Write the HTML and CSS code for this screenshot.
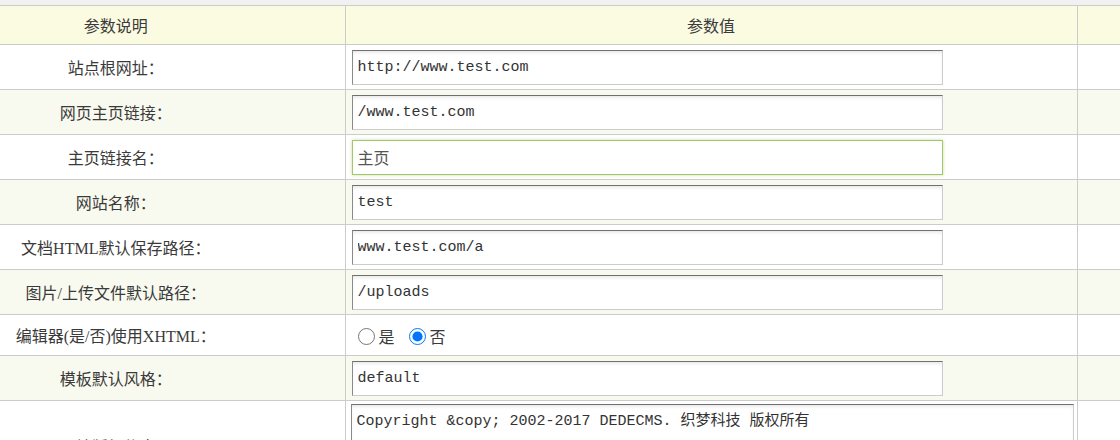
FILE: index.html
```html
<!DOCTYPE html>
<html lang="zh-CN">
<head>
<meta charset="utf-8">
<title>参数设置</title>
<link rel="stylesheet" href="styles.css">
</head>
<body>
<div class="topbar"></div>
<table class="cfg">
  <colgroup>
    <col class="c1"><col class="c2"><col class="c3">
  </colgroup>
  <tr class="head">
    <td class="lbl">参数说明</td>
    <td class="hval">参数值</td>
    <td></td>
  </tr>
  <tr>
    <td class="lbl">站点根网址：</td>
    <td class="val"><input class="txt" type="text" value="http://www.test.com"></td>
    <td></td>
  </tr>
  <tr class="alt">
    <td class="lbl">网页主页链接：</td>
    <td class="val"><input class="txt" type="text" value="/www.test.com"></td>
    <td></td>
  </tr>
  <tr>
    <td class="lbl">主页链接名：</td>
    <td class="val"><input class="txt focus" type="text" value="主页"></td>
    <td></td>
  </tr>
  <tr class="alt">
    <td class="lbl">网站名称：</td>
    <td class="val"><input class="txt" type="text" value="test"></td>
    <td></td>
  </tr>
  <tr>
    <td class="lbl">文档HTML默认保存路径：</td>
    <td class="val"><input class="txt" type="text" value="www.test.com/a"></td>
    <td></td>
  </tr>
  <tr class="alt">
    <td class="lbl">图片/上传文件默认路径：</td>
    <td class="val"><input class="txt" type="text" value="/uploads"></td>
    <td></td>
  </tr>
  <tr class="short">
    <td class="lbl">编辑器(是/否)使用XHTML：</td>
    <td class="val">
      <div class="opts">
        <label class="opt"><input type="radio" name="xhtml">是</label>
        <label class="opt"><input type="radio" name="xhtml" checked>否</label>
      </div>
    </td>
    <td></td>
  </tr>
  <tr class="alt">
    <td class="lbl">模板默认风格：</td>
    <td class="val"><input class="txt" type="text" value="default"></td>
    <td></td>
  </tr>
  <tr class="tall">
    <td class="lbl">网站版权信息：</td>
    <td class="val"><textarea class="area">Copyright &amp;copy; 2002-2017 DEDECMS. 织梦科技 版权所有</textarea></td>
    <td></td>
  </tr>
</table>
</body>
</html>
```

FILE: styles.css
```css
html, body {
  margin: 0;
  padding: 0;
  overflow: hidden;
  background: #ffffff;
}
body {
  font-family: "Liberation Serif", "Noto Sans CJK SC", serif;
  font-size: 16px;
  color: #3a3a3a;
}
.topbar {
  height: 5px;
  background: #f1f1f1;
}
.cfg {
  border-collapse: collapse;
  table-layout: fixed;
  width: 1160px;
}
.c1 { width: 345px; }
.c2 { width: 732px; }
.c3 { width: 83px; }
.cfg td {
  border: 1px solid #cccccc;
  padding: 0;
  height: 44px;
  vertical-align: middle;
}
.cfg td:first-child { border-left: none; }
.head td {
  background: #fbfbe2;
  height: 38px;
}
.alt td {
  background: #f9faef;
}
.short td { height: 40px; }
.tall td { height: 90px; }
.lbl {
  text-align: center;
  padding-right: 113px !important;
  white-space: nowrap;
}
.hval {
  text-align: center;
}
.val {
  padding-left: 6px !important;
}
.txt {
  box-sizing: border-box;
  width: 591px;
  height: 35px;
  margin: 0;
  padding: 0 5px;
  border: 1px solid #cccccc;
  border-top-color: #707070;
  border-left-color: #8a8a8a;
  box-shadow: inset 0 3px 4px -2px rgba(0, 0, 0, 0.12);
  background: #fff;
  font-family: "Liberation Mono", "Noto Sans CJK SC", monospace;
  font-size: 15px;
  color: #333;
  outline: none;
  display: block;
}
.txt.focus {
  border: 1px solid #a3c86a;
  box-shadow: 0 0 3px rgba(160, 200, 100, 0.6);
  font-family: "Noto Sans CJK SC", sans-serif;
  font-size: 16px;
  color: #555;
}
.opts {
  display: flex;
  align-items: center;
  gap: 14px;
  padding-left: 6px;
  padding-top: 2px;
}
.opt {
  display: inline-flex;
  align-items: center;
  gap: 4px;
  font-family: "Noto Sans CJK SC", sans-serif;
  font-size: 16px;
}
.opt input {
  width: 17px;
  height: 17px;
  margin: 0;
  accent-color: #0075ff;
}
.area {
  box-sizing: border-box;
  display: block;
  width: 723px;
  height: 84px;
  margin: 0 0 0 -1px;
  padding: 3px 5px;
  border: 1px solid #cccccc;
  border-top-color: #707070;
  border-left-color: #8a8a8a;
  box-shadow: inset 0 3px 4px -2px rgba(0, 0, 0, 0.12);
  font-family: "Liberation Mono", "Noto Sans CJK SC", monospace;
  font-size: 15px;
  color: #333;
  resize: none;
  outline: none;
}
```
